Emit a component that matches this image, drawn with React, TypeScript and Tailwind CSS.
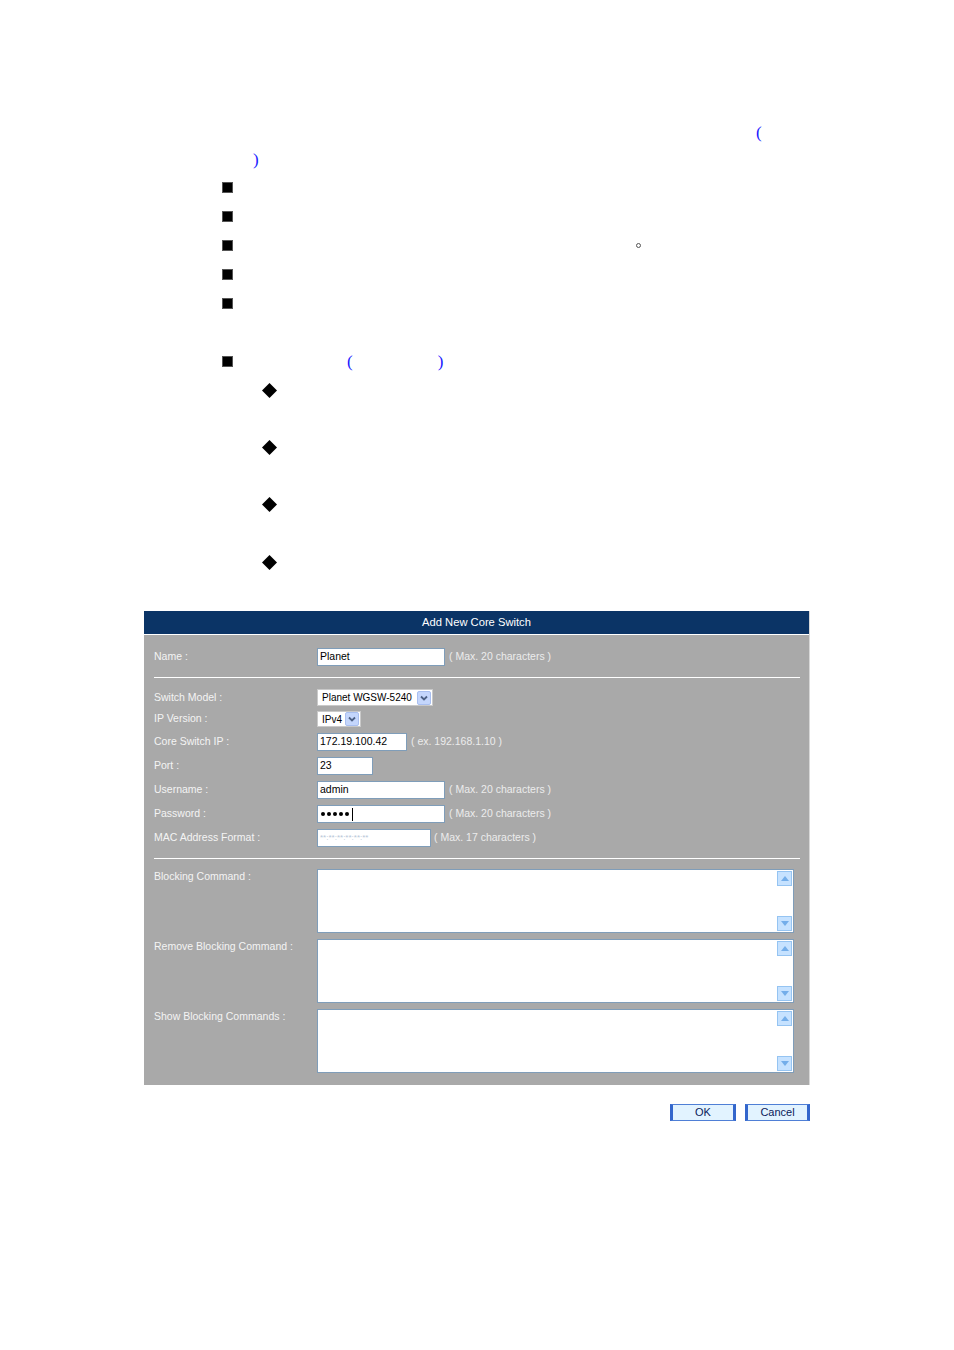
const font = { fontFamily: '"Liberation Sans", Arial, sans-serif' };

function Square() {
  return <span className="block w-[11px] h-[11px] bg-black border border-[#555]" />;
}

function Diamond() {
  return (
    <svg width="15" height="15" viewBox="0 0 15 15" className="block">
      <polygon points="7.5,0 15,7.5 7.5,15 0,7.5" fill="#000" />
    </svg>
  );
}

function Paren({ children }: { children: string }) {
  return <span className="text-[17px] leading-none text-[#1a1aff]" style={{ fontFamily: '"Liberation Serif", serif' }}>{children}</span>;
}

function Label({ children }: { children: string }) {
  return <div className="w-[163px] shrink-0 text-[10.5px] text-[#f4f4f4]">{children}</div>;
}

function Hint({ children, gap = 'ml-[4px]' }: { children: string; gap?: string }) {
  return <span className={`${gap} text-[10.5px] text-[#ececec]`}>{children}</span>;
}

function TextBox({ w, value }: { w: string; value?: string }) {
  return (
    <div className={`${w} h-[18px] bg-white border border-[#7f9db9] flex items-center pl-[2px] text-[10.5px] text-black`}>
      {value}
    </div>
  );
}

function Chevron() {
  return (
    <span className="w-[14px] h-[14px] shrink-0 bg-[#c4d6fc] border border-[#a9bff0] rounded-[2px] flex items-center justify-center">
      <svg width="8" height="6" viewBox="0 0 8 6">
        <path d="M1 1.5 L4 4.5 L7 1.5" stroke="#4d6185" strokeWidth="1.8" fill="none" />
      </svg>
    </span>
  );
}

function Select({ w, h, value }: { w: string; h: string; value: string }) {
  return (
    <div className={`${w} ${h} bg-white border border-[#c9c9c9] flex items-center justify-between pl-[4px] pr-[1px] text-[10px] text-black`}>
      <span className="whitespace-nowrap">{value}</span>
      <Chevron />
    </div>
  );
}

function ScrollBtn({ up }: { up?: boolean }) {
  return (
    <span className="w-[15px] h-[15px] bg-[#c6e2ff] border border-[#95c4f2] flex items-center justify-center">
      <svg width="8" height="5" viewBox="0 0 8 5">
        <polygon points={up ? '0,5 4,0 8,5' : '0,0 8,0 4,5'} fill="#74aeea" />
      </svg>
    </span>
  );
}

function Area() {
  return (
    <div className="w-[477px] h-[64px] bg-white border border-[#7f9db9] flex justify-end">
      <div className="flex flex-col justify-between py-[1px] pr-[1px]">
        <ScrollBtn up />
        <ScrollBtn />
      </div>
    </div>
  );
}

function Row({ label, children, h = 'h-[18px]', mt = 'mt-[6px]' }: { label: string; children: React.ReactNode; h?: string; mt?: string }) {
  return (
    <div className={`flex items-center ${h} ${mt}`}>
      <Label>{label}</Label>
      {children}
    </div>
  );
}

function AreaRow({ label, mt }: { label: string; mt: string }) {
  return (
    <div className={`flex items-start ${mt}`}>
      <div className="w-[163px] shrink-0 text-[10.5px] text-[#f4f4f4]">{label}</div>
      <Area />
    </div>
  );
}

function Btn({ children, w }: { children: string; w: string }) {
  return (
    <button className={`${w} h-[17px] bg-[#e2f3ff] border-y border-[#4f7fd6] border-x-[3px] border-x-[#3366cc] text-[11px] leading-none text-[#0a1a5a]`}>
      {children}
    </button>
  );
}

export default function App() {
  return (
    <div className="w-[954px] min-h-[1350px] bg-white" style={font}>
      <div className="pt-[119px]">
        <div className="h-[26px] flex items-center pl-[756px]"><Paren>(</Paren></div>
        <div className="h-[28px] flex items-center pl-[253px]"><Paren>)</Paren></div>
        <div className="h-[29px] flex items-center pl-[222px]"><Square /></div>
        <div className="h-[29px] flex items-center pl-[222px]"><Square /></div>
        <div className="h-[29px] flex items-center pl-[222px]">
          <Square />
          <span className="ml-[403px] w-[5px] h-[5px] rounded-full border border-[#555]" />
        </div>
        <div className="h-[29px] flex items-center pl-[222px]"><Square /></div>
        <div className="h-[29px] flex items-center pl-[222px]"><Square /></div>
        <div className="h-[29px]" />
        <div className="h-[29px] flex items-center pl-[222px]">
          <Square />
          <span className="ml-[114px]"><Paren>(</Paren></span>
          <span className="ml-[85px]"><Paren>)</Paren></span>
        </div>
        <div className="h-[29px] flex items-center pl-[262px]"><Diamond /></div>
        <div className="h-[28px]" />
        <div className="h-[29px] flex items-center pl-[262px]"><Diamond /></div>
        <div className="h-[28px]" />
        <div className="h-[29px] flex items-center pl-[262px]"><Diamond /></div>
        <div className="h-[29px]" />
        <div className="h-[29px] flex items-center pl-[262px]"><Diamond /></div>
      </div>

      <div className="ml-[144px] w-[666px] mt-[34px]">
        <div className="border-r border-[#d8d8d8]">
          <div className="h-[23px] bg-[#0b3466] flex items-center justify-center text-[11.2px] text-white">
            Add New Core Switch
          </div>
          <div className="h-px bg-white" />
          <div className="bg-[#a9a9a9] pl-[10px] pr-[9px] pt-[13px] pb-[12px]">
            <Row label="Name :" mt="mt-0">
              <TextBox w="w-[128px]" value="Planet" />
              <Hint>( Max. 20 characters )</Hint>
            </Row>
            <div className="mt-[11px] h-px bg-white" />
            <Row label="Switch Model :" h="h-[17px]" mt="mt-[11px]">
              <Select w="w-[116px]" h="h-[17px]" value="Planet WGSW-5240" />
            </Row>
            <Row label="IP Version :" h="h-[16px]" mt="mt-[5px]">
              <Select w="w-[44px]" h="h-[16px]" value="IPv4" />
            </Row>
            <Row label="Core Switch IP :">
              <TextBox w="w-[90px]" value="172.19.100.42" />
              <Hint>( ex. 192.168.1.10 )</Hint>
            </Row>
            <Row label="Port :">
              <TextBox w="w-[56px]" value="23" />
            </Row>
            <Row label="Username :">
              <TextBox w="w-[128px]" value="admin" />
              <Hint>( Max. 20 characters )</Hint>
            </Row>
            <Row label="Password :">
              <div className="w-[128px] h-[18px] bg-white border border-[#7f9db9] flex items-center gap-[2px] pl-[3px]">
                <span className="w-[4px] h-[4px] rounded-full bg-black" />
                <span className="w-[4px] h-[4px] rounded-full bg-black" />
                <span className="w-[4px] h-[4px] rounded-full bg-black" />
                <span className="w-[4px] h-[4px] rounded-full bg-black" />
                <span className="w-[4px] h-[4px] rounded-full bg-black" />
                <span className="ml-[1px] w-px h-[13px] bg-black" />
              </div>
              <Hint>( Max. 20 characters )</Hint>
            </Row>
            <Row label="MAC Address Format :">
              <div className="w-[114px] h-[18px] bg-white border border-[#7f9db9] flex items-center pl-[2px] text-[8px] text-[#b8c6d8]">
                **:**:**:**:**:**
              </div>
              <Hint gap="ml-[3px]">( Max. 17 characters )</Hint>
            </Row>
            <div className="mt-[11px] h-px bg-white" />
            <AreaRow label="Blocking Command :" mt="mt-[10px]" />
            <AreaRow label="Remove Blocking Command :" mt="mt-[6px]" />
            <AreaRow label="Show Blocking Commands :" mt="mt-[6px]" />
          </div>
        </div>
        <div className="mt-[19px] flex justify-end gap-[9px]">
          <Btn w="w-[66px]">OK</Btn>
          <Btn w="w-[65px]">Cancel</Btn>
        </div>
      </div>
    </div>
  );
}
